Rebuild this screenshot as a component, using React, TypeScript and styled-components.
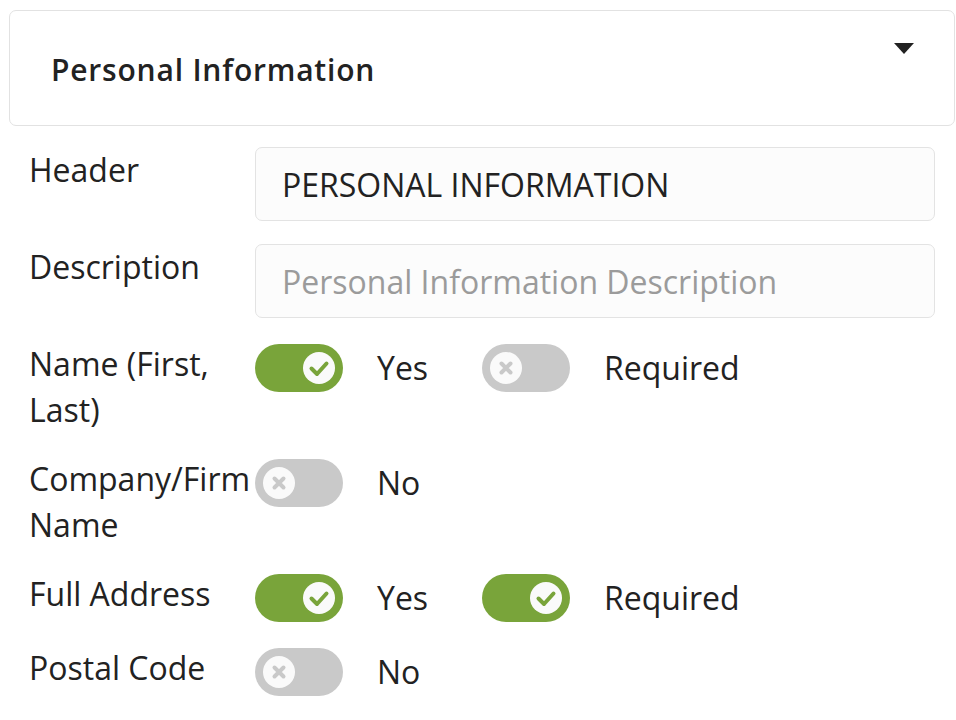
import React from 'react';
import styled, { createGlobalStyle } from "styled-components";

const GlobalStyle = createGlobalStyle`
  body {
    margin: 0;
    background: #fff;
    font-family: "Open Sans", "Noto Sans", sans-serif;
    color: #222;
  }
`

type ToggleProps = {
    on: boolean
    text: string
}

const Toggle = (props: ToggleProps) => {
    return (
        <ToggleGroup>
            <Track $on={props.on}>
                <Knob>
                    {props.on ? (
                        <svg width="32" height="32" viewBox="0 0 32 32">
                            <path d="M8.5 16.5 L14 22 L23.5 11.5" fill="none" stroke="#79a43a" strokeWidth="4"
                                  strokeLinecap="round" strokeLinejoin="round"/>
                        </svg>
                    ) : (
                        <svg width="32" height="32" viewBox="0 0 32 32">
                            <path d="M11.5 11.5 L20.5 20.5 M20.5 11.5 L11.5 20.5" fill="none" stroke="#c9c9c9"
                                  strokeWidth="4" strokeLinecap="round"/>
                        </svg>
                    )}
                </Knob>
            </Track>
            <ToggleText>{props.text}</ToggleText>
        </ToggleGroup>
    );
};

type Switch = { on: boolean, text: string }

type OptionRow = {
    label: string
    switches: Switch[]
}

const options: OptionRow[] = [
    {label: 'Name (First, Last)', switches: [{on: true, text: 'Yes'}, {on: false, text: 'Required'}]},
    {label: 'Company/Firm Name', switches: [{on: false, text: 'No'}]},
    {label: 'Full Address', switches: [{on: true, text: 'Yes'}, {on: true, text: 'Required'}]},
    {label: 'Postal Code', switches: [{on: false, text: 'No'}]},
]

export default function App() {
    return (
        <Page>
            <GlobalStyle/>
            <Card>
                <CardTitle>Personal Information</CardTitle>
                <Caret width="20" height="11" viewBox="0 0 20 11">
                    <polygon points="0,0 20,0 10,11" fill="#222"/>
                </Caret>
            </Card>
            <Form>
                <Row>
                    <Label>Header</Label>
                    <Input defaultValue="PERSONAL INFORMATION"/>
                </Row>
                <Row>
                    <Label>Description</Label>
                    <Input placeholder="Personal Information Description"/>
                </Row>
                {options.map(o => (
                    <Row key={o.label}>
                        <Label>{o.label}</Label>
                        <Controls>
                            {o.switches.map((s, i) => <Toggle key={i} on={s.on} text={s.text}/>)}
                        </Controls>
                    </Row>
                ))}
            </Form>
        </Page>
    );
}

const Page = styled.div`
    padding: 10px 1px 0 9px;
`
const Card = styled.div`
    display: flex;
    justify-content: space-between;
    align-items: flex-start;
    border: 1px solid #e2e2e2;
    border-radius: 7px;
    padding: 32px 40px 36px 41px;
`
const CardTitle = styled.h2`
    margin: 7px 0 0;
    font-size: 30px;
    font-weight: 600;
    letter-spacing: 0.8px;
    line-height: 39px;
    color: #222;
`
const Caret = styled.svg`
    display: block;
`
const Form = styled.div`
    display: flex;
    flex-direction: column;
    gap: 23px;
    padding: 21px 20px 0 20px;
`
const Row = styled.div`
    display: flex;
    align-items: flex-start;
`
const Label = styled.div`
    width: 226px;
    flex-shrink: 0;
    font-size: 32px;
    line-height: 46px;
    color: #222;
`
const Input = styled.input`
    flex: 1;
    min-width: 0;
    height: 74px;
    box-sizing: border-box;
    border: 1px solid #e3e3e3;
    border-radius: 7px;
    background: #fcfcfc;
    padding: 0 26px;
    font-family: "Open Sans", "Noto Sans", sans-serif;
    font-size: 32px;
    color: #222;
    outline: none;

    &::placeholder {
        color: #9b9b9b;
    }
`
const Controls = styled.div`
    display: flex;
    margin-top: 3px;
`
const ToggleGroup = styled.div`
    display: flex;
    align-items: center;
    width: 227px;
`
const Track = styled.div<{ $on: boolean }>`
    width: 88px;
    height: 48px;
    border-radius: 24px;
    background: ${p => p.$on ? '#79a43a' : '#c9c9c9'};
    display: flex;
    align-items: center;
    justify-content: ${p => p.$on ? 'flex-end' : 'flex-start'};
    padding: 0 8px;
    box-sizing: border-box;
    flex-shrink: 0;
`
const Knob = styled.div`
    width: 32px;
    height: 32px;
    border-radius: 50%;
    background: #fafafa;
    svg {
        display: block;
    }
`
const ToggleText = styled.span`
    margin-left: 34px;
    font-size: 32px;
    line-height: 46px;
    color: #222;
`
